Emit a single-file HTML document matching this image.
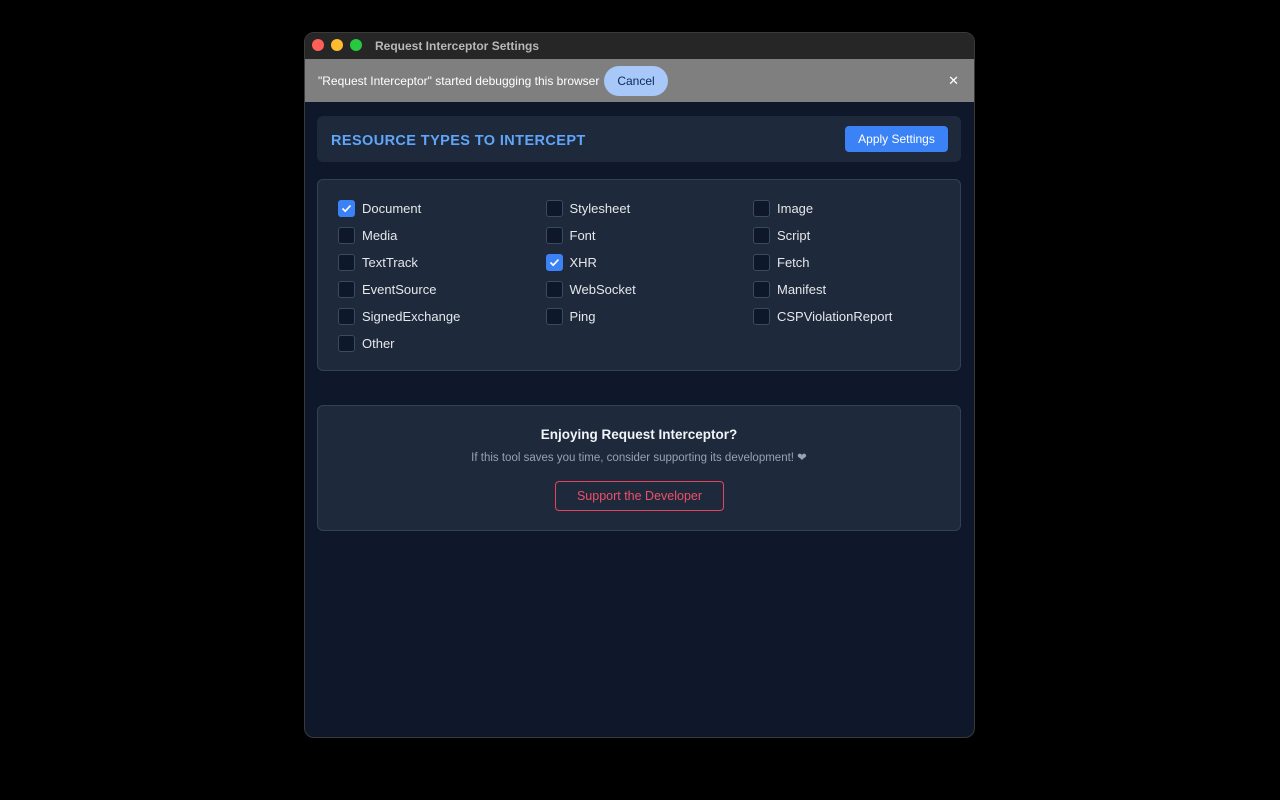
<!DOCTYPE html>
<html><head><style>
*{box-sizing:border-box;margin:0;padding:0}
body{width:1280px;height:800px;background:#000;font-family:"Liberation Sans",sans-serif;position:relative;overflow:hidden}
.win{position:absolute;left:304px;top:32px;width:671px;height:706px;border-radius:10px;background:#0f172a;overflow:hidden;border:1px solid #3a3a3a}
.tb{height:26px;background:#262626;position:relative}
.dot{position:absolute;top:6px;width:12px;height:12px;border-radius:50%}
.tt{position:absolute;left:70px;top:6px;color:#b8b8b8;font-size:12px;font-weight:bold}
.bn{height:43px;background:#7f7f7f;position:relative;color:#fff;font-size:12px}
.bn .t{position:absolute;left:13px;top:15px}
.cancel{position:absolute;left:299px;top:7px;width:64px;height:30px;border-radius:15px;background:#a8c8fa;color:#0b2a5a;font-size:12px;text-align:center;line-height:30px}
.x{position:absolute;right:15px;top:14px;color:#fff;font-size:13px}
.card{position:absolute;left:12px;width:644px;background:#1e293b;border-radius:6px}
.hd{top:83px;height:46px}
.hd .h{position:absolute;left:14px;top:17px;color:#60a5fa;font-weight:bold;font-size:14.5px;letter-spacing:.4px}
.apply{position:absolute;right:13px;top:10px;width:103px;height:26px;background:#3b82f6;border-radius:4px;color:#fff;font-size:12px;text-align:center;line-height:26px}
.grid{top:146px;height:192px;border:1px solid #334155}
.cb{position:absolute;width:17px;height:17px;border:1px solid #3b4a60;border-radius:3px;background:#0f172a}
.cb.on{background:#3b82f6;border-color:#3b82f6}
.lb{position:absolute;color:#e5e7eb;font-size:13px}
.sup{top:372px;height:126px;border:1px solid #334155;text-align:center}
.sup .a{margin-top:21px;color:#f1f5f9;font-weight:bold;font-size:13.5px}
.sup .b{margin-top:8px;color:#94a3b8;font-size:11.5px}
.btn{position:absolute;left:237px;top:75px;width:169px;height:30px;border:1px solid #e0445e;border-radius:4px;color:#ef4f6a;font-size:12.5px;line-height:28px}
</style></head><body>
<div class="win">
<div class="tb"><div class="dot" style="left:7px;background:#ff5f57"></div><div class="dot" style="left:26px;background:#febc2e"></div><div class="dot" style="left:45px;background:#28c840"></div><div class="tt">Request Interceptor Settings</div></div>
<div class="bn"><div class="t">"Request Interceptor" started debugging this browser</div><div class="cancel">Cancel</div><div class="x">✕</div></div>
<div class="card hd"><div class="h">RESOURCE TYPES TO INTERCEPT</div><div class="apply">Apply Settings</div></div>
<div class="card grid" id="g"></div>
<div class="card sup"><div class="a">Enjoying Request Interceptor?</div><div class="b">If this tool saves you time, consider supporting its development! ❤</div><div class="btn">Support the Developer</div></div>
</div>
<script>
var items=[["Document",1],["Stylesheet",0],["Image",0],["Media",0],["Font",0],["Script",0],["TextTrack",0],["XHR",1],["Fetch",0],["EventSource",0],["WebSocket",0],["Manifest",0],["SignedExchange",0],["Ping",0],["CSPViolationReport",0],["Other",0]];
var g=document.getElementById('g'),h='';
items.forEach(function(it,i){var c=i%3,r=Math.floor(i/3);var x=20+c*207.5,y=20+r*27;
h+='<div class="cb'+(it[1]?' on':'')+'" style="left:'+x+'px;top:'+y+'px">'+(it[1]?'<svg width="15" height="15" viewBox="0 0 15 15"><path d="M3.5 7.5l2.7 2.7 5.3-5.6" stroke="#fff" stroke-width="1.7" fill="none"/></svg>':'')+'</div><div class="lb" style="left:'+(x+24)+'px;top:'+(y+1)+'px">'+it[0]+'</div>';});
g.innerHTML=h;
</script>
</body></html>
